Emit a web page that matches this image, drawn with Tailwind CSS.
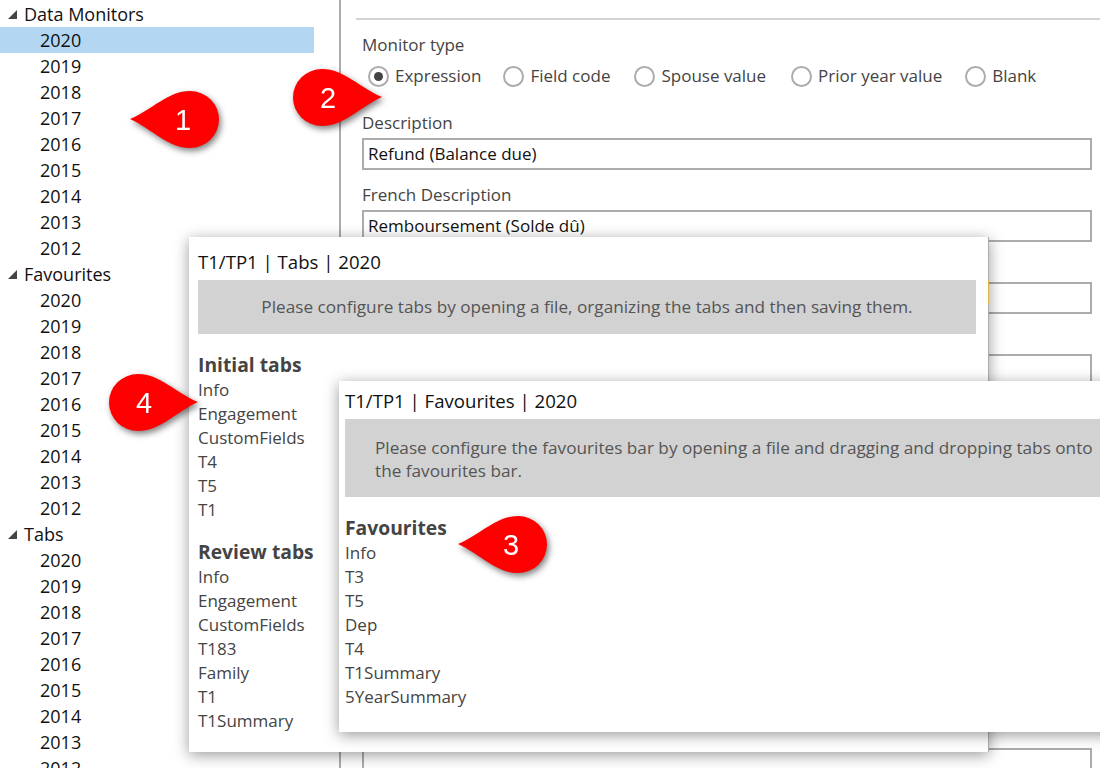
<!DOCTYPE html>
<html>
<head>
<meta charset="utf-8">
<title>Data Monitors</title>
<script src="https://cdn.jsdelivr.net/npm/@tailwindcss/browser@4"></script>
</head>
<body class="bg-white">
<div class="relative w-[1100px] h-[768px] overflow-hidden flex font-['Open_Sans',sans-serif] text-[17px]">

    <!-- tree -->
    <aside class="w-[341px] h-full shrink-0 border-r-2 border-[#acacac] pt-px text-[18px] text-[#111] overflow-hidden">
        <div class="h-[26px] flex items-center gap-[7px] pl-2">
            <svg class="w-[9px] h-[9px] fill-[#444]" viewBox="0 0 9 9"><path d="M9 0V9H0Z"/></svg>
            <span>Data Monitors</span>
        </div>
        <div class="h-[26px] w-[314px] flex items-center pl-10 bg-[#b3d7f3]">2020</div>
        <div class="h-[26px] flex items-center pl-10">2019</div>
        <div class="h-[26px] flex items-center pl-10">2018</div>
        <div class="h-[26px] flex items-center pl-10">2017</div>
        <div class="h-[26px] flex items-center pl-10">2016</div>
        <div class="h-[26px] flex items-center pl-10">2015</div>
        <div class="h-[26px] flex items-center pl-10">2014</div>
        <div class="h-[26px] flex items-center pl-10">2013</div>
        <div class="h-[26px] flex items-center pl-10">2012</div>
        <div class="h-[26px] flex items-center gap-[7px] pl-2">
            <svg class="w-[9px] h-[9px] fill-[#444]" viewBox="0 0 9 9"><path d="M9 0V9H0Z"/></svg>
            <span>Favourites</span>
        </div>
        <div class="h-[26px] flex items-center pl-10">2020</div>
        <div class="h-[26px] flex items-center pl-10">2019</div>
        <div class="h-[26px] flex items-center pl-10">2018</div>
        <div class="h-[26px] flex items-center pl-10">2017</div>
        <div class="h-[26px] flex items-center pl-10">2016</div>
        <div class="h-[26px] flex items-center pl-10">2015</div>
        <div class="h-[26px] flex items-center pl-10">2014</div>
        <div class="h-[26px] flex items-center pl-10">2013</div>
        <div class="h-[26px] flex items-center pl-10">2012</div>
        <div class="h-[26px] flex items-center gap-[7px] pl-2">
            <svg class="w-[9px] h-[9px] fill-[#444]" viewBox="0 0 9 9"><path d="M9 0V9H0Z"/></svg>
            <span>Tabs</span>
        </div>
        <div class="h-[26px] flex items-center pl-10">2020</div>
        <div class="h-[26px] flex items-center pl-10">2019</div>
        <div class="h-[26px] flex items-center pl-10">2018</div>
        <div class="h-[26px] flex items-center pl-10">2017</div>
        <div class="h-[26px] flex items-center pl-10">2016</div>
        <div class="h-[26px] flex items-center pl-10">2015</div>
        <div class="h-[26px] flex items-center pl-10">2014</div>
        <div class="h-[26px] flex items-center pl-10">2013</div>
        <div class="h-[26px] flex items-center pl-10">2012</div>
    </aside>

    <!-- form -->
    <main class="flex-1 pt-[18px] pl-[15px] text-[#444]">
        <div class="h-[2px] bg-[#d2d2d2]"></div>
        <div class="pl-[6px] pr-2">
            <div class="h-[24px] mt-[13px] flex items-center">Monitor type</div>
            <div class="h-[24px] mt-[7px] flex items-center pl-[6px]">
                <span class="w-[21px] h-[21px] rounded-full border-2 border-[#acacac] flex items-center justify-center"><span class="w-[9px] h-[9px] rounded-full bg-[#444]"></span></span>
                <span class="ml-[6px] mr-[22px]">Expression</span>
                <span class="w-[21px] h-[21px] rounded-full border-2 border-[#acacac]"></span>
                <span class="ml-[6px] mr-[24px]">Field code</span>
                <span class="w-[21px] h-[21px] rounded-full border-2 border-[#acacac]"></span>
                <span class="ml-[6px] mr-[25px]">Spouse value</span>
                <span class="w-[21px] h-[21px] rounded-full border-2 border-[#acacac]"></span>
                <span class="ml-[6px] mr-[23px]">Prior year value</span>
                <span class="w-[21px] h-[21px] rounded-full border-2 border-[#acacac]"></span>
                <span class="ml-[6px]">Blank</span>
            </div>
            <div class="h-[24px] mt-[23px] flex items-center">Description</div>
            <div class="h-[32px] mt-[3px] border-2 border-[#acacac] flex items-center pl-1 text-[#111]">Refund (Balance due)</div>
            <div class="h-[24px] mt-[13px] flex items-center">French Description</div>
            <div class="h-[32px] mt-[3px] border-2 border-[#acacac] flex items-center pl-1 text-[#111]">Remboursement (Solde dû)</div>
            <div class="h-[32px] mt-[40px] border-2 border-[#acacac]"></div>
            <div class="h-[32px] mt-[40px] border-2 border-[#acacac] border-b-0"></div>
            <div class="h-[40px] mt-[362px] border-2 border-[#acacac] border-b-0"></div>
        </div>
    </main>

    <!-- tabs panel -->
    <section class="absolute left-[189px] top-[237px] w-[800px] h-[515px] bg-white border-r border-[#acacac] shadow-[0_3px_14px_rgba(0,0,0,0.4)] pl-[9px] pr-3 text-[#444]">
        <span class="absolute -right-px top-[43px] w-px h-[24px] bg-[#d9b84a]"></span>
        <h2 class="h-[24px] mt-[13px] flex items-center text-[#111] text-[18.6px]">T1/TP1 | Tabs | 2020</h2>
        <div class="h-[54px] mt-[6px] bg-[#d2d2d2] flex items-center justify-center text-[#555] text-[17.2px]">Please configure tabs by opening a file, organizing the tabs and then saving them.</div>
        <h3 class="h-[24px] mt-[19px] flex items-center font-bold text-[19.3px]">Initial tabs</h3>
        <ul class="mt-px">
            <li class="h-[24px] flex items-center">Info</li>
            <li class="h-[24px] flex items-center">Engagement</li>
            <li class="h-[24px] flex items-center">CustomFields</li>
            <li class="h-[24px] flex items-center">T4</li>
            <li class="h-[24px] flex items-center">T5</li>
            <li class="h-[24px] flex items-center">T1</li>
        </ul>
        <h3 class="h-[24px] mt-[18px] flex items-center font-bold text-[19.3px]">Review tabs</h3>
        <ul class="mt-px">
            <li class="h-[24px] flex items-center">Info</li>
            <li class="h-[24px] flex items-center">Engagement</li>
            <li class="h-[24px] flex items-center">CustomFields</li>
            <li class="h-[24px] flex items-center">T183</li>
            <li class="h-[24px] flex items-center">Family</li>
            <li class="h-[24px] flex items-center">T1</li>
            <li class="h-[24px] flex items-center">T1Summary</li>
        </ul>
    </section>

    <!-- favourites panel -->
    <section class="absolute left-[339px] top-[381px] w-[780px] h-[351px] bg-white shadow-[0_3px_14px_rgba(0,0,0,0.4)] pl-[6px] text-[#444]">
        <h2 class="h-[24px] mt-[8px] flex items-center text-[#111] text-[18.6px]">T1/TP1 | Favourites | 2020</h2>
        <div class="h-[78px] mt-[6px] bg-[#d2d2d2] pl-[30px] pr-6 pt-[17px] leading-[23px] text-[#555] text-[17.2px]">Please configure the favourites bar by opening a file and dragging and dropping tabs onto the favourites bar.</div>
        <h3 class="h-[24px] mt-[19px] flex items-center font-bold text-[19.3px]">Favourites</h3>
        <ul class="mt-px">
            <li class="h-[24px] flex items-center">Info</li>
            <li class="h-[24px] flex items-center">T3</li>
            <li class="h-[24px] flex items-center">T5</li>
            <li class="h-[24px] flex items-center">Dep</li>
            <li class="h-[24px] flex items-center">T4</li>
            <li class="h-[24px] flex items-center">T1Summary</li>
            <li class="h-[24px] flex items-center">5YearSummary</li>
        </ul>
    </section>

    <!-- callouts -->
    <svg class="absolute left-[130px] top-[91px] w-[89px] h-[57px] overflow-visible drop-shadow-[2px_3px_3px_rgba(0,0,0,0.5)]" viewBox="0 0 89 57">
        <path fill="#fe0000" d="M0 28C22 19 38 0 60 0A29 28.5 0 0 1 60 57C38 57 22 38 0 28Z"/>
        <text x="53" y="39" fill="#fff" text-anchor="middle" font-size="29" font-family="Liberation Sans">1</text>
    </svg>
    <svg class="absolute left-[293px] top-[69px] w-[89px] h-[57px] overflow-visible drop-shadow-[2px_3px_3px_rgba(0,0,0,0.5)]" viewBox="0 0 89 57">
        <path fill="#fe0000" d="M89 28C67 19 51 0 29 0A29 28.5 0 0 0 29 57C51 57 67 38 89 28Z"/>
        <text x="35" y="39" fill="#fff" text-anchor="middle" font-size="29" font-family="Liberation Sans">2</text>
    </svg>
    <svg class="absolute left-[458px] top-[516px] w-[89px] h-[57px] overflow-visible drop-shadow-[2px_3px_3px_rgba(0,0,0,0.5)]" viewBox="0 0 89 57">
        <path fill="#fe0000" d="M0 28C22 19 38 0 60 0A29 28.5 0 0 1 60 57C38 57 22 38 0 28Z"/>
        <text x="53" y="39" fill="#fff" text-anchor="middle" font-size="29" font-family="Liberation Sans">3</text>
    </svg>
    <svg class="absolute left-[109px] top-[374px] w-[89px] h-[57px] overflow-visible drop-shadow-[2px_3px_3px_rgba(0,0,0,0.5)]" viewBox="0 0 89 57">
        <path fill="#fe0000" d="M89 28C67 19 51 0 29 0A29 28.5 0 0 0 29 57C51 57 67 38 89 28Z"/>
        <text x="35" y="39" fill="#fff" text-anchor="middle" font-size="29" font-family="Liberation Sans">4</text>
    </svg>
</div>
</body>
</html>
